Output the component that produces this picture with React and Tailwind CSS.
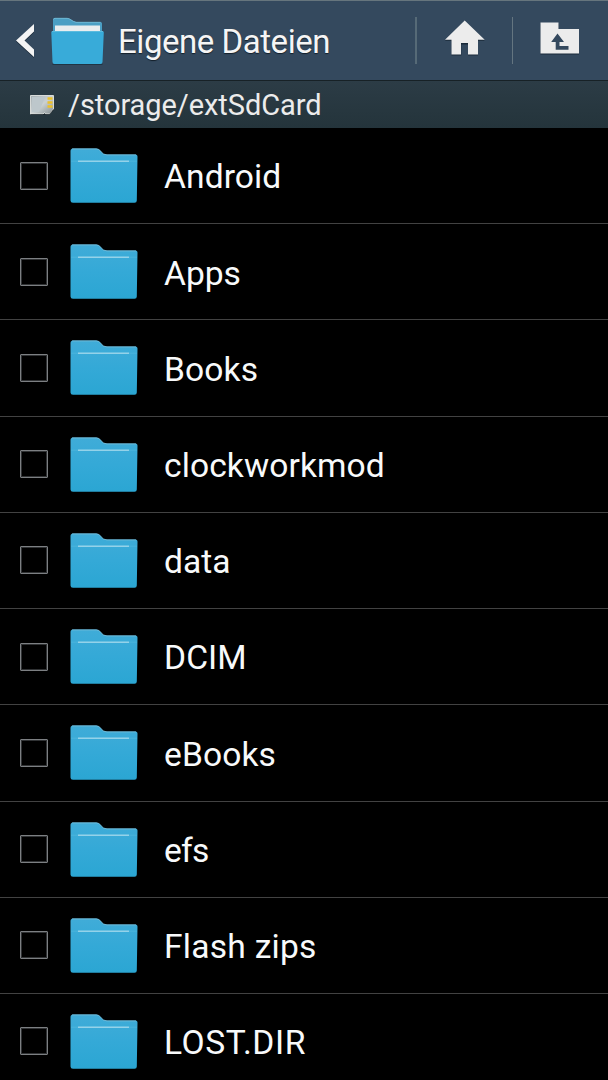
import React from "react";

const folders = [
  { name: "Android", tracking: "tracking-[0.1px]" },
  { name: "Apps", tracking: "tracking-[0px]" },
  { name: "Books", tracking: "tracking-[0.1px]" },
  { name: "clockworkmod", tracking: "tracking-[0.08px]" },
  { name: "data", tracking: "tracking-[0px]" },
  { name: "DCIM", tracking: "tracking-[0.1px]" },
  { name: "eBooks", tracking: "tracking-[0.1px]" },
  { name: "efs", tracking: "tracking-[-0.8px]" },
  { name: "Flash zips", tracking: "tracking-[0.25px]" },
  { name: "LOST.DIR", tracking: "tracking-[0.6px]" },
];

function BackIcon() {
  return (
    <svg className="h-9 w-5 shrink-0" viewBox="0 0 20 36" aria-hidden="true">
      <path d="M18 2V9.500L8.500 18.500 18 27.500V35L0 18.500Z" fill="#1b2b3a" />
      <path d="M18 1V8.500L8.500 17.500 18 26.500V34L0 17.500Z" fill="#f4f4f4" />
    </svg>
  );
}

function AppFolderIcon() {
  return (
    <svg className="h-12 w-[54px] shrink-0" viewBox="0 0 54 48" aria-hidden="true">
      <path d="M2 33V2.500Q2 1 3.500 1H16q2 0 4 1.600T25 5h24.500Q51 5 51 6.500V34Z" fill="#4b9fc4" />
      <path d="M2.500 2.500Q2.700 1.300 4 1.300H16q2 0 4 1.600T25 5.300h24.500" fill="none" stroke="#78bcd8" strokeWidth=".8" />
      <path d="M4 8.500h45v7H4Z" fill="#e9edef" />
      <path d="M2 48h49l1-1H1Z" fill="#203444" />
      <path d="M.3 15.500Q.2 14 1.500 14h50q1.400 0 1.300 1.500L51.500 45q-.1 2-2 2h-46q-1.800 0-2-2Z" fill="#38abd9" />
      <path d="M1 14.500h51" stroke="#65bfe0" strokeWidth=".8" />
    </svg>
  );
}

function FolderIcon() {
  return (
    <svg className="h-[56px] w-[68px] shrink-0" viewBox="0 0 68 56" aria-hidden="true">
      <defs>
        <linearGradient id="folder-fill" x1="0" y1="0" x2="0" y2="1">
          <stop offset="0" stopColor="#40acd8" />
          <stop offset=".5" stopColor="#34a9d7" />
          <stop offset="1" stopColor="#2ba6d3" />
        </linearGradient>
      </defs>
      <path
        d="M.5 3Q.5.500 3 .500h23.500q2.500 0 4.300 2.500Q33 6.500 37 6.500h28.500Q67.500 6.500 67.500 8.500l-.7 44q0 2.300-2.300 2.300H3Q.5 54.800.5 52.500Z"
        fill="url(#folder-fill)"
      />
      <path d="M2 .9h24.500q2.500 0 4.300 2.500Q33 6.900 37 6.900h29" fill="none" stroke="#7fc0da" strokeWidth=".8" />
      <path d="M1 13.200h66" stroke="#4ab4dc" />
      <path d="M8 13.200h51" stroke="#94d2e9" strokeWidth="1.400" />
    </svg>
  );
}

function HomeIcon() {
  return (
    <svg className="h-9 w-10" viewBox="0 0 40 36" aria-hidden="true">
      <path d="M19.700 1.500 39.700 20.800H33V35.500H23V24.500H16.300V35.500H6.500V20.800H0Z" fill="#1b2b3a" />
      <path d="M19.700.5 39.700 19.800H33V34.500H23V23H16V34.500H6.500V19.800H0Z" fill="#ececec" />
    </svg>
  );
}

function FolderUpIcon() {
  return (
    <svg className="h-[33px] w-10" viewBox="0 0 40 33" aria-hidden="true">
      <path d="M.5 1.500h18v6.500h20.500V32.500H.5Z" fill="#1b2b3a" />
      <path d="M.5.500h18V7h20.500V31.500H.5Z" fill="#ececec" />
      <path d="M17.500 11.500 24 20h-4.500v4h9v3.700H15.700V20h-4.500Z" fill="#34495e" />
    </svg>
  );
}

function SdCardIcon() {
  return (
    <svg className="h-5 w-6 shrink-0" viewBox="0 0 24 20" aria-hidden="true">
      <defs>
        <linearGradient id="card-fill" x1="0" y1="0" x2="1" y2="1">
          <stop offset="0" stopColor="#a4adb1" />
          <stop offset=".5" stopColor="#cbd1d2" />
          <stop offset="1" stopColor="#858e91" />
        </linearGradient>
      </defs>
      <path d="M.5.500h23v13.500l-4 5h-4l-1-1.500-1.500 1.500H.5Z" fill="url(#card-fill)" stroke="#e3e5e2" strokeWidth=".9" />
      <path d="M2 2h13L9 17H2Z" fill="#bdc7cb" />
      <path d="M17.500 3.500h5M17.500 7.500h5M17.500 11.500h5" stroke="#ecc12b" strokeWidth="2.600" />
      <path d="M1 19.500h18.500l4-5" fill="none" stroke="#182126" strokeWidth=".7" />
    </svg>
  );
}

function FolderRow({ name, tracking }) {
  return (
    <li className="flex h-[96.220px] shrink-0 items-start border-b border-[#424242] pl-5">
      <input
        type="checkbox"
        aria-label={name}
        className="mt-[33.500px] size-7 shrink-0 appearance-none rounded-[1px] border border-[#7c7f82] inset-shadow-[0_0_0_1px_#303234]"
      />
      <span className="mt-[20px] ml-[22px] flex">
        <FolderIcon />
      </span>
      <span className={`mt-[29.300px] ml-[26px] text-[33.600px] leading-10 whitespace-nowrap text-[#f8fafb] ${tracking}`}>
        {name}
      </span>
    </li>
  );
}

export default function App() {
  return (
    <main className="flex h-[1080px] w-[608px] flex-col overflow-hidden bg-black font-['Roboto',sans-serif]">
      <header className="flex h-20 shrink-0 items-start border-t border-[#66757d] bg-[#34495e] pl-4">
        <button className="mt-[22px] flex" aria-label="Back">
          <BackIcon />
        </button>
        <span className="mt-[16px] ml-[15px] flex">
          <AppFolderIcon />
        </span>
        <h1 className="mt-[21px] ml-[13px] w-[297px] text-[33px] leading-10 tracking-[-0.45px] whitespace-nowrap text-[#f5f5f5] [text-shadow:0_1px_1px_#14202b]">
          Eigene Dateien
        </h1>
        <button className="mt-4 flex h-[47px] w-[97px] shrink-0 items-start justify-center border-l-2 border-[#566a77] pt-[3px]" aria-label="Home">
          <HomeIcon />
        </button>
        <button className="mt-4 flex h-[47px] w-[95px] shrink-0 items-start justify-center border-l border-[#647580] pt-[5px]" aria-label="Parent folder">
          <FolderUpIcon />
        </button>
      </header>
      <nav className="flex h-12 shrink-0 items-start border-t border-[#172126] bg-linear-to-b from-[#2c3c46] to-[#24343b] pl-[30px]">
        <span className="mt-[14px] flex">
          <SdCardIcon />
        </span>
        <span className="mt-[4px] ml-[14px] text-[29px] leading-10 tracking-[-0.07px] whitespace-nowrap text-[#ececec]">
          /storage/extSdCard
        </span>
      </nav>
      <ul className="flex flex-col">
        {folders.map((folder) => (
          <FolderRow key={folder.name} {...folder} />
        ))}
      </ul>
    </main>
  );
}
